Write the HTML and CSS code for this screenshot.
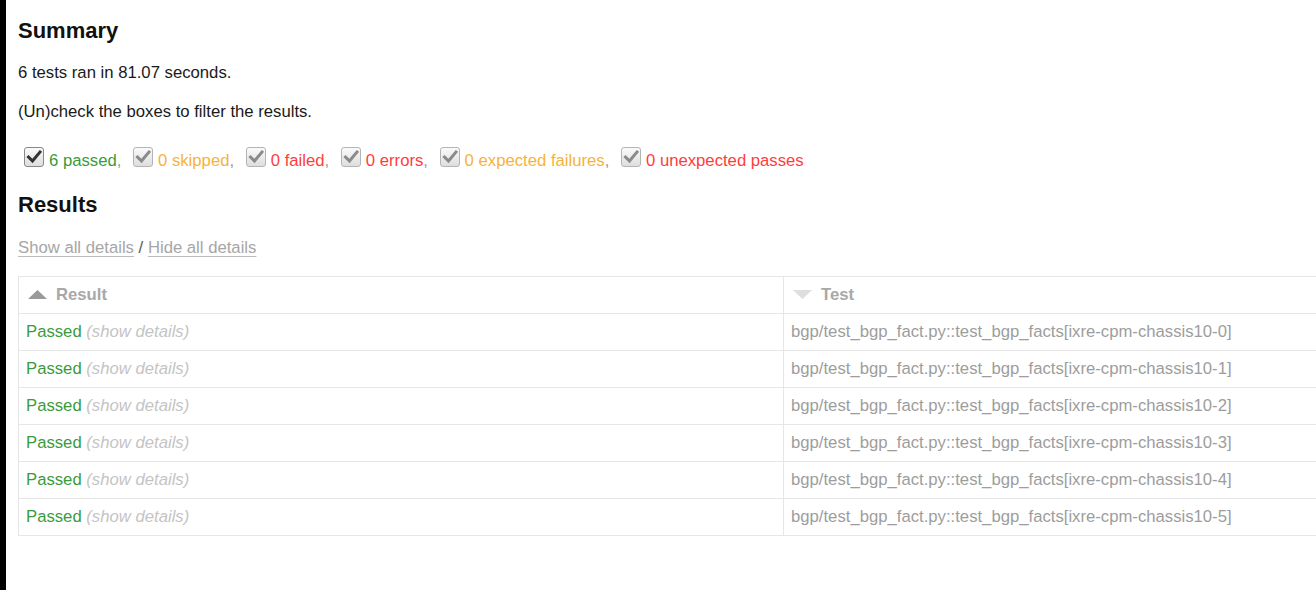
FILE: index.html
```html
<!DOCTYPE html>
<html lang="en">
<head>
    <meta charset="UTF-8">
    <title>Test Report</title>
    <link rel="stylesheet" href="styles.css">
</head>
<body>
    <div class="page">
        <h2 class="summary-title">Summary</h2>
        <p>6 tests ran in 81.07 seconds.</p>
        <p class="hint">(Un)check the boxes to filter the results.</p>

        <!-- result filters -->
        <div class="filters">
            <span class="box focused"><svg viewBox="0 0 20 20" width="20" height="20"><path d="M4.5 10 L8.5 14 L16 5"/></svg></span><span class="passed">6 passed</span>,
            <span class="box"><svg viewBox="0 0 20 20" width="20" height="20"><path d="M4.5 10 L8.5 14 L16 5"/></svg></span><span class="skipped">0 skipped</span>,
            <span class="box"><svg viewBox="0 0 20 20" width="20" height="20"><path d="M4.5 10 L8.5 14 L16 5"/></svg></span><span class="failed">0 failed</span>,
            <span class="box"><svg viewBox="0 0 20 20" width="20" height="20"><path d="M4.5 10 L8.5 14 L16 5"/></svg></span><span class="failed">0 errors</span>,
            <span class="box"><svg viewBox="0 0 20 20" width="20" height="20"><path d="M4.5 10 L8.5 14 L16 5"/></svg></span><span class="skipped">0 expected failures</span>,
            <span class="box"><svg viewBox="0 0 20 20" width="20" height="20"><path d="M4.5 10 L8.5 14 L16 5"/></svg></span><span class="failed">0 unexpected passes</span>
        </div>

        <h2 class="results-title">Results</h2>
        <p class="toggles"><a href="#">Show all details</a> / <a href="#">Hide all details</a></p>

        <table class="results-table">
            <thead>
                <tr>
                    <th class="col-result"><svg class="sort" viewBox="0 0 19 9" width="19" height="9"><polygon points="0,9 9.5,0 19,9" fill="#9a9a9a"/></svg>Result</th>
                    <th class="col-name"><svg class="sort" viewBox="0 0 19 9" width="19" height="9"><polygon points="0,0 19,0 9.5,9" fill="#dedede"/></svg>Test</th>
                </tr>
            </thead>
            <tbody>
                <tr><td><span class="passed">Passed</span> <span class="expander">(show details)</span></td><td>bgp/test_bgp_fact.py::test_bgp_facts[ixre-cpm-chassis10-0]</td></tr>
                <tr><td><span class="passed">Passed</span> <span class="expander">(show details)</span></td><td>bgp/test_bgp_fact.py::test_bgp_facts[ixre-cpm-chassis10-1]</td></tr>
                <tr><td><span class="passed">Passed</span> <span class="expander">(show details)</span></td><td>bgp/test_bgp_fact.py::test_bgp_facts[ixre-cpm-chassis10-2]</td></tr>
                <tr><td><span class="passed">Passed</span> <span class="expander">(show details)</span></td><td>bgp/test_bgp_fact.py::test_bgp_facts[ixre-cpm-chassis10-3]</td></tr>
                <tr><td><span class="passed">Passed</span> <span class="expander">(show details)</span></td><td>bgp/test_bgp_fact.py::test_bgp_facts[ixre-cpm-chassis10-4]</td></tr>
                <tr><td><span class="passed">Passed</span> <span class="expander">(show details)</span></td><td>bgp/test_bgp_fact.py::test_bgp_facts[ixre-cpm-chassis10-5]</td></tr>
            </tbody>
        </table>
    </div>
</body>
</html>
```

FILE: styles.css
```css
html, body { margin: 0; padding: 0; background: #fff; overflow: hidden; }
body { font-family: "Liberation Sans", Arial, Helvetica, sans-serif; font-size: 16.7px; line-height: 22px; color: #999; }
.page { border-left: 6px solid #000; padding: 0 0 0 12px; min-height: 590px; box-sizing: border-box; overflow: hidden; }

h2 { font-size: 22px; line-height: 26px; color: #111; font-weight: bold; margin: 0; }
.summary-title { padding-top: 18px; margin-bottom: 18px; }
.results-title { margin-top: 21px; margin-bottom: 19px; }
p { color: #1a1a1a; margin: 0 0 17px; }

.filters { margin-top: 24px; height: 24px; color: #999; white-space: nowrap; }
.box { display: inline-block; width: 20px; height: 20px; box-sizing: border-box; border: 1px solid #b4b4b4; border-radius: 3px; background: linear-gradient(#fafafa, #dedede); margin: 0 5px 0 7px; vertical-align: -1px; position: relative; }
.box:first-child { margin-left: 6px; }
.box svg { position: absolute; left: -1px; top: -1px; }
.box path { fill: none; stroke: #8a8a8a; stroke-width: 3; stroke-linecap: square; }
.box.focused { border-color: #888; }
.box.focused path { stroke: #333; }

.passed { color: #3a9b3a; }
.skipped { color: #f7b23b; }
.failed { color: #ff3c3c; }

.toggles { color: #555; margin-bottom: 17px; }
.toggles a { color: #a6a6a6; text-decoration: underline; text-decoration-color: #bbb; text-underline-offset: 3px; }

.results-table { border-collapse: collapse; width: 1700px; border: 1px solid #e6e6e6; color: #9d9d9d; }
.results-table th, .results-table td { padding: 7px; border: 1px solid #e6e6e6; text-align: left; line-height: 22px; white-space: nowrap; }
.results-table th { color: #a8a8a8; font-weight: bold; }
.col-result { width: 750px; }
.sort { margin: 0 9px 0 2px; vertical-align: 1px; }
.expander { color: #c4c4c4; font-style: italic; }
```
